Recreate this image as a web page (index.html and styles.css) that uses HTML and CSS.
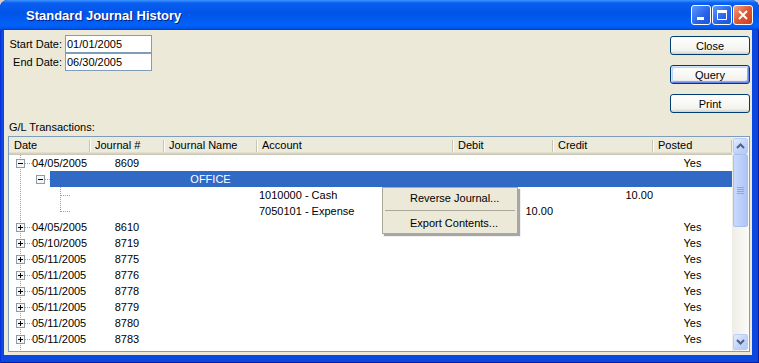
FILE: index.html
```html
<!DOCTYPE html>
<html lang="en">
<head>
    <meta charset="UTF-8">
    <title>Standard Journal History</title>
    <link rel="stylesheet" href="styles.css">
</head>
<body>
    <svg class="sprite" xmlns="http://www.w3.org/2000/svg">
        <symbol id="t-plus" viewBox="0 0 23 16">
            <path d="M11.5 0V16M16 8.5H23" stroke="#a0a0a0" stroke-dasharray="1 1"/>
            <rect x="7.5" y="4.5" width="8" height="8" fill="#f7f6f2" stroke="#8c9bab"/>
            <path d="M9 8.5H14M11.5 6V11" stroke="#000"/>
        </symbol>
        <symbol id="t-minus" viewBox="0 0 23 16">
            <path d="M11.5 0V16M16 8.5H23" stroke="#a0a0a0" stroke-dasharray="1 1"/>
            <rect x="7.5" y="4.5" width="8" height="8" fill="#f7f6f2" stroke="#8c9bab"/>
            <path d="M9 8.5H14" stroke="#000"/>
        </symbol>
        <symbol id="t-office" viewBox="0 0 41 16">
            <path d="M11.5 0V16M36 8.5H41" stroke="#a0a0a0" stroke-dasharray="1 1"/>
            <rect x="27.5" y="4.5" width="8" height="8" fill="#f7f6f2" stroke="#8c9bab"/>
            <path d="M29 8.5H34" stroke="#000"/>
        </symbol>
        <symbol id="t-leaf" viewBox="0 0 62 16">
            <path d="M11.5 0V16M51.5 0V16M52 8.5H62" stroke="#a0a0a0" stroke-dasharray="1 1"/>
        </symbol>
        <symbol id="t-leaf-last" viewBox="0 0 62 16">
            <path d="M11.5 0V16M51.5 0V9M52 8.5H62" stroke="#a0a0a0" stroke-dasharray="1 1"/>
        </symbol>
    </svg>

    <div class="window">
        <div class="titlebar">
            <span class="title">Standard Journal History</span>
            <div class="controls">
                <span class="ctl">
                    <svg width="18" height="18" viewBox="0 0 18 18"><rect x="5" y="11" width="7" height="3" fill="#fff"/></svg>
                </span>
                <span class="ctl">
                    <svg width="18" height="18" viewBox="0 0 18 18"><path d="M4.5 4.5H13.5V13.5H4.5Z" fill="none" stroke="#fff"/><rect x="4" y="4" width="10" height="3" fill="#fff"/></svg>
                </span>
                <span class="ctl close">
                    <svg width="18" height="18" viewBox="0 0 18 18"><path d="M5 5L13 13M13 5L5 13" stroke="#fff" stroke-width="2"/></svg>
                </span>
            </div>
        </div>

        <div class="client">
            <div class="top">
                <div class="fields">
                    <label for="startDate">Start Date:</label>
                    <input type="text" id="startDate" value="01/01/2005">
                    <label for="endDate">End Date:</label>
                    <input type="text" id="endDate" value="06/30/2005">
                </div>
                <div class="actions">
                    <button type="button" class="btn">Close</button>
                    <button type="button" class="btn default">Query</button>
                    <button type="button" class="btn">Print</button>
                </div>
            </div>

            <div class="caption">G/L Transactions:</div>

            <div class="grid-box">
                <div class="list">
                    <div class="row head">
                        <span>Date</span>
                        <span>Journal #</span>
                        <span>Journal Name</span>
                        <span>Account</span>
                        <span>Debit</span>
                        <span>Credit</span>
                        <span>Posted</span>
                    </div>
                    <div class="rows">
                        <div class="row">
                            <span class="c-date"><svg class="g0"><use href="#t-minus"/></svg>04/05/2005</span>
                            <span class="c-mid">8609</span><span></span><span></span><span></span><span></span>
                            <span class="c-mid">Yes</span>
                        </div>
                        <div class="row sel">
                            <span class="c-date"><svg class="g1"><use href="#t-office"/></svg><span class="fill"></span></span>
                            <span></span><span class="c-mid">OFFICE</span><span></span><span></span><span></span><span></span>
                        </div>
                        <div class="row">
                            <span class="c-date"><svg class="g2"><use href="#t-leaf"/></svg></span>
                            <span></span><span></span><span class="c-acct">1010000 - Cash</span><span></span>
                            <span class="c-amt">10.00</span><span></span>
                        </div>
                        <div class="row">
                            <span class="c-date"><svg class="g2"><use href="#t-leaf-last"/></svg></span>
                            <span></span><span></span><span class="c-acct">7050101 - Expense</span>
                            <span class="c-amt">10.00</span><span></span><span></span>
                        </div>
                        <div class="row">
                            <span class="c-date"><svg class="g0"><use href="#t-plus"/></svg>04/05/2005</span>
                            <span class="c-mid">8610</span><span></span><span></span><span></span><span></span>
                            <span class="c-mid">Yes</span>
                        </div>
                        <div class="row">
                            <span class="c-date"><svg class="g0"><use href="#t-plus"/></svg>05/10/2005</span>
                            <span class="c-mid">8719</span><span></span><span></span><span></span><span></span>
                            <span class="c-mid">Yes</span>
                        </div>
                        <div class="row">
                            <span class="c-date"><svg class="g0"><use href="#t-plus"/></svg>05/11/2005</span>
                            <span class="c-mid">8775</span><span></span><span></span><span></span><span></span>
                            <span class="c-mid">Yes</span>
                        </div>
                        <div class="row">
                            <span class="c-date"><svg class="g0"><use href="#t-plus"/></svg>05/11/2005</span>
                            <span class="c-mid">8776</span><span></span><span></span><span></span><span></span>
                            <span class="c-mid">Yes</span>
                        </div>
                        <div class="row">
                            <span class="c-date"><svg class="g0"><use href="#t-plus"/></svg>05/11/2005</span>
                            <span class="c-mid">8778</span><span></span><span></span><span></span><span></span>
                            <span class="c-mid">Yes</span>
                        </div>
                        <div class="row">
                            <span class="c-date"><svg class="g0"><use href="#t-plus"/></svg>05/11/2005</span>
                            <span class="c-mid">8779</span><span></span><span></span><span></span><span></span>
                            <span class="c-mid">Yes</span>
                        </div>
                        <div class="row">
                            <span class="c-date"><svg class="g0"><use href="#t-plus"/></svg>05/11/2005</span>
                            <span class="c-mid">8780</span><span></span><span></span><span></span><span></span>
                            <span class="c-mid">Yes</span>
                        </div>
                        <div class="row">
                            <span class="c-date"><svg class="g0"><use href="#t-plus"/></svg>05/11/2005</span>
                            <span class="c-mid">8783</span><span></span><span></span><span></span><span></span>
                            <span class="c-mid">Yes</span>
                        </div>
                        <div class="row">
                            <span class="c-date"><svg class="g0"><use href="#t-plus"/></svg>05/11/2005</span>
                            <span class="c-mid">8784</span><span></span><span></span><span></span><span></span>
                            <span class="c-mid">Yes</span>
                        </div>
                    </div>
                </div>

                <div class="vscroll">
                    <span class="sb-btn">
                        <svg width="9" height="6" viewBox="0 0 9 6"><path d="M1 5L4.5 1.5L8 5" fill="none" stroke="#4d6185" stroke-width="2"/></svg>
                    </span>
                    <span class="sb-thumb">
                        <svg width="7" height="8" viewBox="0 0 7 8"><path d="M0 0.5H7M0 2.5H7M0 4.5H7M0 6.5H7" stroke="#8ea5e0"/></svg>
                    </span>
                    <span class="sb-track"></span>
                    <span class="sb-btn">
                        <svg width="9" height="6" viewBox="0 0 9 6"><path d="M1 1L4.5 4.5L8 1" fill="none" stroke="#4d6185" stroke-width="2"/></svg>
                    </span>
                </div>
            </div>
        </div>

        <!-- right-click menu over the grid -->
        <div class="menu">
            <div class="menu-item">Reverse Journal...</div>
            <div class="menu-sep"></div>
            <div class="menu-item">Export Contents...</div>
        </div>
    </div>
</body>
</html>
```

FILE: styles.css
```css
body {
    margin: 0;
    background: #d4d0c8;
    font-family: "Liberation Sans", Arial, sans-serif;
    font-size: 11px;
    color: #000;
}

.sprite {
    display: none;
}

.window {
    width: 759px;
    height: 363px;
    display: flex;
    flex-direction: column;
    position: relative;
    background: #0b48e0;
    border-radius: 8px 8px 0 0;
    box-shadow: inset 1px 0 #0831d9, inset -1px -1px #001ea0;
    overflow: hidden;
}

.titlebar {
    height: 30px;
    flex: none;
    display: flex;
    align-items: center;
    justify-content: space-between;
    padding: 0 6px 0 26px;
    background: linear-gradient(180deg, #3d95ff 0%, #0a5ef0 10%, #0055e8 45%, #0062fa 85%, #0058ee 93%, #003dd7 100%);
}

.title {
    color: #fff;
    font-weight: bold;
    font-size: 13px;
    text-shadow: 1px 1px #0a1e80;
}

.controls {
    display: flex;
    gap: 1px;
}

.ctl {
    width: 20px;
    height: 20px;
    box-sizing: border-box;
    border: 1px solid #fff;
    border-radius: 3px;
    background: linear-gradient(135deg, #5c97ff, #2663e8 60%, #1e52d8);
    display: flex;
    align-items: center;
    justify-content: center;
}

.ctl.close {
    background: linear-gradient(135deg, #f0a089, #e2572e 50%, #c8401c);
}

.client {
    flex: 1;
    margin: 0 7px 8px 4px;
    padding: 5px 2px 3px 4px;
    background: #ece9d8;
    display: flex;
    flex-direction: column;
}

.top {
    height: 78px;
    display: flex;
    justify-content: space-between;
    align-items: flex-start;
}

.fields {
    display: grid;
    grid-template-columns: 54px 87px;
    column-gap: 3px;
    align-items: center;
}

.fields label {
    text-align: right;
}

.fields input {
    width: 87px;
    height: 18px;
    box-sizing: border-box;
    margin: 0;
    padding: 0 0 0 1px;
    border: 1px solid #7f9db9;
    background: #fff;
    font: 11px "Liberation Sans", Arial, sans-serif;
    color: #000;
}

.actions {
    display: flex;
    flex-direction: column;
    gap: 10px;
    margin-top: 1px;
}

.btn {
    width: 80px;
    height: 19px;
    padding: 0;
    border: 1px solid #003c74;
    border-radius: 3px;
    background: linear-gradient(#ffffff, #f3f3ee 80%, #d6d0c5);
    font: 11px "Liberation Sans", Arial, sans-serif;
    color: #000;
}

.btn.default {
    box-shadow: inset 1px 1px #cee7ff, inset -1px -1px #6982ee, inset 2px 2px #bcd4f6, inset -2px -2px #89ade4;
}

.caption {
    margin: 8px 0 2px;
    padding-left: 1px;
    line-height: 13px;
}

.grid-box {
    width: 742px;
    height: 216px;
    box-sizing: border-box;
    border: 1px solid #7f9db9;
    background: #fff;
    display: flex;
}

.list {
    flex: 1;
    display: flex;
    flex-direction: column;
    overflow: hidden;
}

.row {
    display: grid;
    grid-template-columns: 81px 74px 93px 196px 100px 100px 79px;
    height: 16px;
    line-height: 16px;
    white-space: nowrap;
    flex: none;
}

.row > span {
    overflow: hidden;
}

.head {
    height: 18px;
    line-height: 17px;
    background: #ebeadb;
    box-shadow: inset 0 -1px #cbc7b8, inset 0 -2px #d6d2c2, inset 0 -3px #e2decd;
}

.head span {
    padding-left: 5px;
    background:
        linear-gradient(#c7c5b2, #c7c5b2) right 0 top 3px / 1px 12px no-repeat,
        linear-gradient(#fff, #fff) left 0 top 3px / 1px 12px no-repeat;
}

.head span:first-child {
    background: linear-gradient(#c7c5b2, #c7c5b2) right 0 top 3px / 1px 12px no-repeat;
}

.rows {
    flex: 1;
    overflow: hidden;
}

.c-date {
    display: flex;
}

.c-date svg {
    height: 16px;
    flex: none;
}

.g0 { width: 23px; }
.g1 { width: 41px; }
.g2 { width: 62px; }

.c-mid {
    text-align: center;
}

.c-acct {
    padding-left: 2px;
}

.c-amt {
    text-align: right;
}

.sel > span:not(.c-date),
.sel .fill {
    background: #316ac5;
    color: #fff;
}

.sel .fill {
    flex: 1;
}

.vscroll {
    width: 17px;
    flex: none;
    display: flex;
    flex-direction: column;
    background: linear-gradient(90deg, #eeede5, #fbfbf8);
}

.sb-btn {
    height: 16px;
    margin: 1px 1px 0;
    box-sizing: border-box;
    border: 1px solid #bbcdf5;
    border-radius: 2px;
    background: linear-gradient(135deg, #e3ebff, #c1d3fb 60%, #b4c8f6);
    display: flex;
    align-items: center;
    justify-content: center;
}

.sb-btn:last-child {
    margin: 0 1px 1px;
}

.sb-thumb {
    height: 73px;
    margin: 0 1px;
    box-sizing: border-box;
    border: 1px solid #a9bff2;
    border-radius: 2px;
    background: linear-gradient(90deg, #cad9fd, #bccffa 50%, #b0c5f5);
    display: flex;
    align-items: center;
    justify-content: center;
}

.sb-track {
    flex: 1;
}

.menu {
    position: absolute;
    left: 382px;
    top: 187px;
    width: 136px;
    box-sizing: border-box;
    padding: 1px 2px;
    border: 1px solid #aca899;
    background: #ece9d8;
    box-shadow: 2px 2px 1px rgba(0, 0, 0, 0.35);
}

.menu-item {
    height: 18px;
    line-height: 18px;
    padding-left: 25px;
}

.menu-sep {
    height: 1px;
    margin: 3px 0;
    background: #aca899;
}
```
